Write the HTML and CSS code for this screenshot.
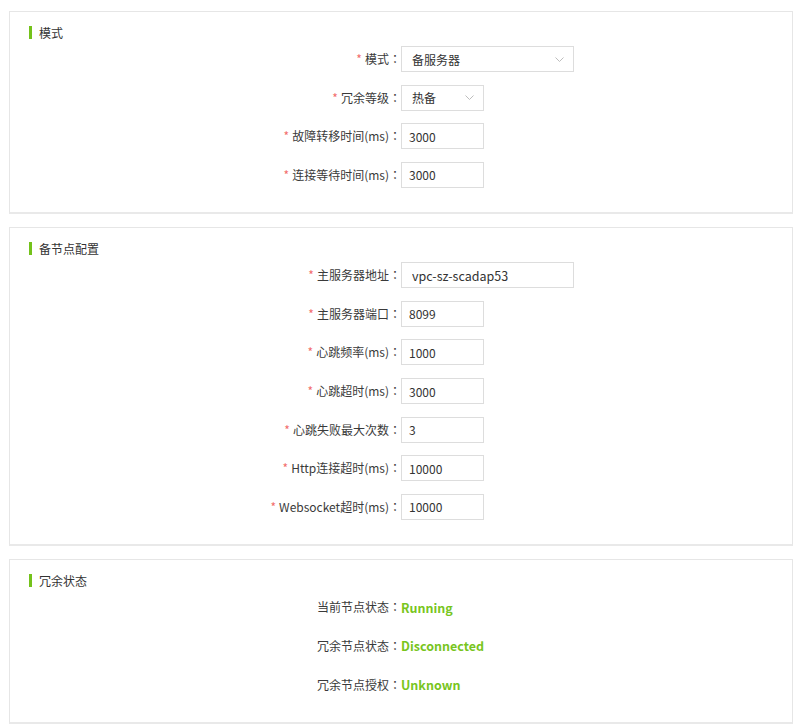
FILE: index.html
```html
<!DOCTYPE html>
<html lang="zh-CN">
<head>
<meta charset="utf-8">
<title>冗余配置</title>
<link rel="stylesheet" href="styles.css">
</head>
<body>
<div class="page">
  <section class="panel">
    <h3 class="panel-title">模式</h3>
    <div class="form">
      <div class="row">
        <label class="label"><span class="req">*</span>模式<span class="colon" lang="zh-TW">：</span></label>
        <div class="control">
          <div class="select wide"><span>备服务器</span><svg class="chev" width="9" height="5" viewBox="0 0 9 5"><polyline points="0.5,0.5 4.5,4.5 8.5,0.5" fill="none" stroke="#bdbdbd" stroke-width="1"/></svg></div>
        </div>
      </div>
      <div class="row">
        <label class="label"><span class="req">*</span>冗余等级<span class="colon" lang="zh-TW">：</span></label>
        <div class="control">
          <div class="select narrow"><span>热备</span><svg class="chev" width="9" height="5" viewBox="0 0 9 5"><polyline points="0.5,0.5 4.5,4.5 8.5,0.5" fill="none" stroke="#bdbdbd" stroke-width="1"/></svg></div>
        </div>
      </div>
      <div class="row">
        <label class="label"><span class="req">*</span>故障转移时间(ms)<span class="colon" lang="zh-TW">：</span></label>
        <div class="control"><input class="input narrow" value="3000"></div>
      </div>
      <div class="row">
        <label class="label"><span class="req">*</span>连接等待时间(ms)<span class="colon" lang="zh-TW">：</span></label>
        <div class="control"><input class="input narrow" value="3000"></div>
      </div>
    </div>
  </section>

  <section class="panel">
    <h3 class="panel-title">备节点配置</h3>
    <div class="form">
      <div class="row">
        <label class="label"><span class="req">*</span>主服务器地址<span class="colon" lang="zh-TW">：</span></label>
        <div class="control"><input class="input wide roomy" value="vpc-sz-scadap53"></div>
      </div>
      <div class="row">
        <label class="label"><span class="req">*</span>主服务器端口<span class="colon" lang="zh-TW">：</span></label>
        <div class="control"><input class="input narrow" value="8099"></div>
      </div>
      <div class="row">
        <label class="label"><span class="req">*</span>心跳频率(ms)<span class="colon" lang="zh-TW">：</span></label>
        <div class="control"><input class="input narrow" value="1000"></div>
      </div>
      <div class="row">
        <label class="label"><span class="req">*</span>心跳超时(ms)<span class="colon" lang="zh-TW">：</span></label>
        <div class="control"><input class="input narrow" value="3000"></div>
      </div>
      <div class="row">
        <label class="label"><span class="req">*</span>心跳失败最大次数<span class="colon" lang="zh-TW">：</span></label>
        <div class="control"><input class="input narrow" value="3"></div>
      </div>
      <div class="row">
        <label class="label"><span class="req">*</span>Http连接超时(ms)<span class="colon" lang="zh-TW">：</span></label>
        <div class="control"><input class="input narrow" value="10000"></div>
      </div>
      <div class="row">
        <label class="label"><span class="req">*</span>Websocket超时(ms)<span class="colon" lang="zh-TW">：</span></label>
        <div class="control"><input class="input narrow" value="10000"></div>
      </div>
    </div>
  </section>

  <section class="panel">
    <h3 class="panel-title">冗余状态</h3>
    <div class="form">
      <div class="row">
        <span class="label">当前节点状态<span class="colon" lang="zh-TW">：</span></span>
        <div class="control"><span class="status">Running</span></div>
      </div>
      <div class="row">
        <span class="label">冗余节点状态<span class="colon" lang="zh-TW">：</span></span>
        <div class="control"><span class="status">Disconnected</span></div>
      </div>
      <div class="row">
        <span class="label">冗余节点授权<span class="colon" lang="zh-TW">：</span></span>
        <div class="control"><span class="status">Unknown</span></div>
      </div>
    </div>
  </section>
</div>
</body>
</html>
```

FILE: styles.css
```css
* {
  box-sizing: border-box;
}

html, body {
  margin: 0;
  padding: 0;
  background: #ffffff;
}

body {
  font-family: "Noto Sans CJK SC", "Open Sans", sans-serif;
  font-size: 12px;
  color: #333333;
}

.page {
  padding: 11px 8px 0 9px;
  display: flex;
  flex-direction: column;
  gap: 13.5px;
}

.panel {
  border: 1px solid #e6e6e6;
  border-bottom: 2px solid #e9e9e9;
  padding: 14px 0 24px 0;
}

.panel-title {
  margin: 0 0 7px 19px;
  height: 13px;
  display: flex;
  align-items: center;
  font-size: 12px;
  font-weight: normal;
  line-height: 13px;
  color: #333333;
}

.panel-title::before {
  content: "";
  display: block;
  width: 3px;
  height: 13px;
  background: #74c21b;
  margin-right: 7px;
}

.form {
  display: flex;
  flex-direction: column;
  gap: 12.6px;
}

.row {
  display: flex;
  align-items: center;
  height: 26px;
}

.label {
  width: 50%;
  text-align: right;
  white-space: nowrap;
  line-height: 26px;
  color: #3a3a3a;
}

.colon {
  font-family: "Noto Sans CJK TC", "Noto Sans CJK SC", sans-serif;
}

.req {
  color: #f26d6d;
  margin-right: 3px;
}

.control {
  flex: 1;
  display: flex;
  align-items: center;
}

.input,
.select {
  height: 26px;
  border: 1px solid #dddddd;
  border-radius: 0;
  background: #ffffff;
  font-family: "Noto Sans CJK SC", "Open Sans", sans-serif;
  font-size: 12px;
  color: #333333;
  padding: 0 7px;
  outline: none;
  margin: 0;
}

.select {
  display: flex;
  align-items: center;
  justify-content: space-between;
  padding: 0 9px 0 10px;
}

.input.roomy {
  padding-left: 10px;
  font-size: 12.5px;
}

.wide {
  width: 173px;
}

.narrow {
  width: 83px;
}

.chev {
  display: block;
  flex: none;
}

.status {
  color: #78c51d;
  font-weight: bold;
  font-size: 12.5px;
}
```
